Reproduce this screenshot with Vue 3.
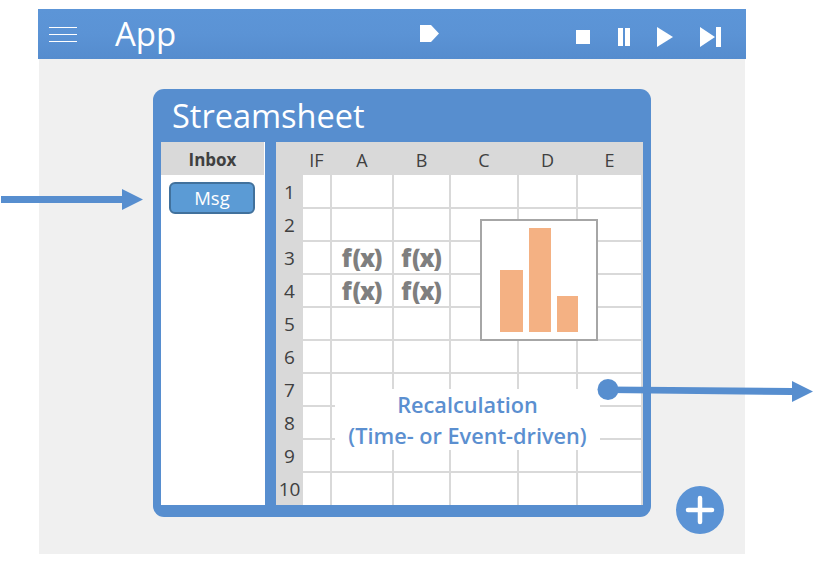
<script setup>
const columns = [
  { name: 'IF', width: 29 },
  { name: 'A', width: 62 },
  { name: 'B', width: 57 },
  { name: 'C', width: 68 },
  { name: 'D', width: 59 },
  { name: 'E', width: 65 }
]
const rows = [1, 2, 3, 4, 5, 6, 7, 8, 9, 10]
const gridColumns = columns.map(c => c.width + 'px').join(' ')

// formula cells: row number -> column names
function hasFormula(row, col) {
  return (row === 3 || row === 4) && (col === 'A' || col === 'B')
}
</script>

<template>
  <div class="page">
    <div class="app">
      <header class="appBar">
        <div class="burger"><span></span><span></span><span></span></div>
        <div class="appTitle">App</div>
        <svg class="tag" width="19" height="17" viewBox="0 0 19 17"><path d="M0 0H11L19 8.5 11 17H0Z" fill="#fff" /></svg>
        <div class="controls">
          <svg width="14" height="14" viewBox="0 0 14 14"><rect width="14" height="14" fill="#fff" /></svg>
          <svg class="pause" width="12" height="18" viewBox="0 0 12 18"><path d="M0 0H5V18H0ZM7 0H12V18H7Z" fill="#fff" /></svg>
          <svg class="play" width="16" height="20" viewBox="0 0 16 20"><path d="M0 0L16 10 0 20Z" fill="#fff" /></svg>
          <svg class="next" width="21" height="20" viewBox="0 0 21 20"><path d="M0 0L15 10 0 20ZM16 0H21V20H16Z" fill="#fff" /></svg>
        </div>
      </header>

      <div class="appBody">
        <section class="panel">
          <div class="panelTitle">Streamsheet</div>
          <div class="panelBody">
            <div class="inbox">
              <div class="inboxHead">Inbox</div>
              <div class="msg">Msg</div>
            </div>
            <div class="sheet">
              <div class="colHeads" :style="{ gridTemplateColumns: '27px ' + gridColumns }">
                <div></div>
                <div v-for="col in columns" :key="col.name" class="colHead">{{ col.name }}</div>
              </div>
              <div class="gridWrap">
                <div class="rowHeads">
                  <div v-for="row in rows" :key="row" class="rowHead">{{ row }}</div>
                </div>
                <div class="cells" :style="{ gridTemplateColumns: gridColumns }">
                  <template v-for="row in rows" :key="row">
                    <div v-for="col in columns" :key="col.name" class="cell">
                      <span v-if="hasFormula(row, col.name)" class="formula">f (x)</span>
                    </div>
                  </template>
                </div>
              </div>
              <div class="chart">
                <div class="bar bar1"></div>
                <div class="bar bar2"></div>
                <div class="bar bar3"></div>
              </div>
              <div class="recalc">Recalculation<br />(Time- or Event-driven)</div>
            </div>
          </div>
        </section>
        <div class="fab">
          <svg width="48" height="48" viewBox="0 0 48 48"><path d="M24 12V36M12 24H36" stroke="#fff" stroke-width="4.5" stroke-linecap="round" /></svg>
        </div>
      </div>
    </div>

    <svg class="arrows" width="835" height="578" viewBox="0 0 835 578">
      <path d="M1 196H122V189L143 199.5 122 210V203H1Z" fill="#578ecf" />
      <circle cx="608" cy="389.5" r="10.5" fill="#578ecf" />
      <path d="M608 386.5L792 388V381L813 391.5 792 402V395L608 393Z" fill="#578ecf" />
    </svg>
  </div>
</template>

<style>
body {
  background: #fff;
}
</style>

<style scoped>
.page {
  position: relative;
  width: 835px;
  height: 578px;
  overflow: hidden;
  padding-top: 9px;
  padding-left: 39px;
  box-sizing: border-box;
  font-family: "Open Sans", "Noto Sans", sans-serif;
}

.app {
  position: relative;
  width: 706px;
}

.appBar {
  display: flex;
  align-items: center;
  height: 50px;
  margin: 0 -1px;
  padding-left: 11px;
  box-sizing: border-box;
  background: linear-gradient(#5c95d7 0%, #5b93d5 50%, #558cce 100%);
  color: #fff;
}

.burger {
  display: flex;
  flex-direction: column;
  gap: 6px;
  width: 28px;
}

.burger span {
  height: 1px;
  background: #fff;
}

.appTitle {
  width: 60px;
  margin-left: 38px;
  font-size: 33px;
  line-height: 50px;
  margin-top: -1px;
}

.tag {
  margin-left: 245px;
  margin-right: 137px;
  margin-top: -1px;
}

.controls {
  display: flex;
  align-items: center;
  margin-top: 6px;
}

.pause {
  margin-left: 28px;
}

.play {
  margin-left: 27px;
}

.next {
  margin-left: 27px;
}

.appBody {
  position: relative;
  height: 495px;
  padding-top: 30px;
  padding-left: 114px;
  box-sizing: border-box;
  background: #f0f0f0;
}

.panel {
  width: 498px;
  height: 428px;
  padding: 0 8px 12px;
  box-sizing: border-box;
  background: #578ecf;
  border-radius: 11px;
}

.panelTitle {
  height: 53px;
  padding-left: 11px;
  font-size: 32.5px;
  line-height: 53px;
  color: #fff;
}

.panelBody {
  display: flex;
  gap: 11px;
  height: 363px;
}

.inbox {
  width: 104px;
  background: #fff;
}

.inboxHead {
  height: 33px;
  margin-right: 1px;
  background: #d9d9d9;
  font-size: 17px;
  font-weight: 700;
  line-height: 35px;
  text-align: center;
  color: #404040;
}

.msg {
  width: 86px;
  height: 32px;
  margin: 7px 0 0 8px;
  box-sizing: border-box;
  background: #5b9bd5;
  border: 2px solid #41719c;
  border-radius: 6px;
  font-size: 18.5px;
  line-height: 28px;
  text-align: center;
  color: #fff;
}

.sheet {
  position: relative;
  width: 367px;
  background: #fff;
}

.colHeads {
  display: grid;
  height: 33px;
  background: #d9d9d9;
}

.colHead {
  padding-right: 2px;
  font-size: 18px;
  line-height: 36px;
  text-align: center;
  color: #404040;
}

.gridWrap {
  display: flex;
  height: 330px;
}

.rowHeads {
  display: grid;
  grid-template-rows: repeat(10, 33px);
  width: 27px;
  background: #d9d9d9;
}

.rowHead {
  font-size: 19px;
  line-height: 34px;
  text-align: center;
  color: #404040;
}

.cells {
  display: grid;
  grid-template-rows: 34px repeat(8, 33px) 32px;
}

.cell {
  display: flex;
  align-items: center;
  justify-content: center;
  border-right: 2px solid #d9d9d9;
  border-bottom: 2px solid #d9d9d9;
}

.cell:nth-last-child(-n + 6) {
  border-bottom: 0;
}

.formula {
  margin-right: 1px;
  font-size: 24px;
  font-weight: 800;
  letter-spacing: -1.2px;
  word-spacing: -3px;
  color: #7f7f7f;
  white-space: nowrap;
}

.chart {
  position: absolute;
  left: 204px;
  top: 77px;
  display: flex;
  align-items: flex-end;
  gap: 6px;
  width: 118px;
  height: 122px;
  padding: 0 18px 7px 18px;
  box-sizing: border-box;
  background: #fff;
  border: 2px solid #a6a6a6;
}

.bar {
  background: #f4b183;
}

.bar1 {
  width: 23px;
  height: 62px;
}

.bar2 {
  width: 22px;
  height: 104px;
}

.bar3 {
  width: 21px;
  height: 36px;
}

.recalc {
  position: absolute;
  left: 59px;
  top: 247px;
  width: 265px;
  height: 61px;
  background: #fff;
  font-size: 21.7px;
  font-weight: 600;
  line-height: 31px;
  text-align: center;
  color: #5b8fd0;
}

.fab {
  position: absolute;
  left: 637px;
  top: 427px;
  width: 48px;
  height: 48px;
  border-radius: 50%;
  background: #5b93d5;
}

.arrows {
  position: absolute;
  left: 0;
  top: 0;
  pointer-events: none;
}
</style>
